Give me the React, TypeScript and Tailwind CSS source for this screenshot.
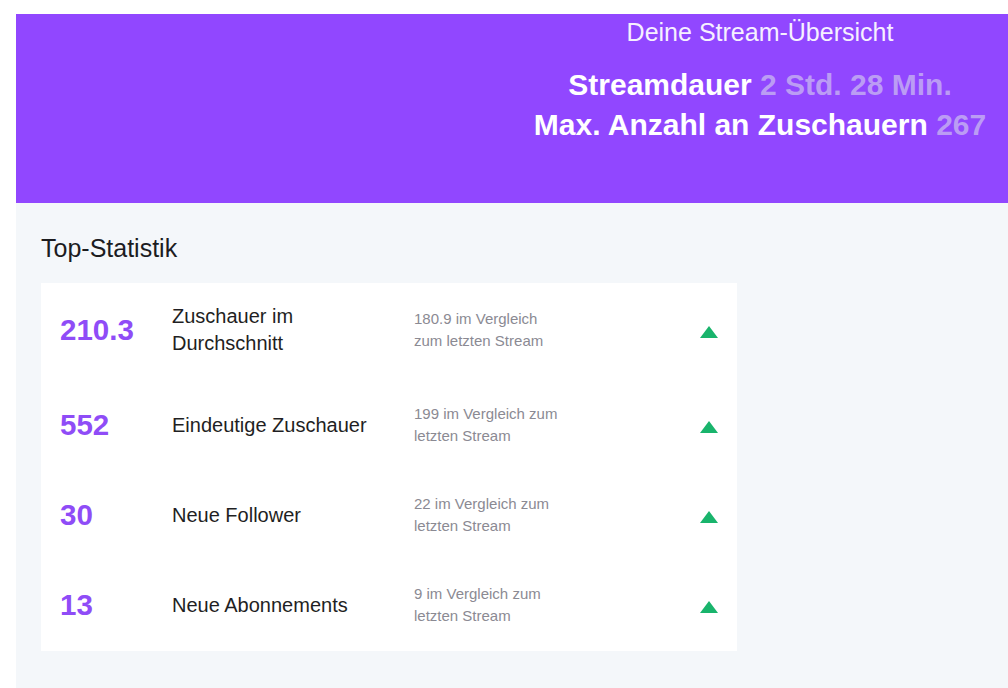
import React from "react";

const rows = [
  { value: "210.3", label: "Zuschauer im Durchschnitt", cmp: "180.9 im Vergleich zum letzten Stream" },
  { value: "552", label: "Eindeutige Zuschauer", cmp: "199 im Vergleich zum letzten Stream" },
  { value: "30", label: "Neue Follower", cmp: "22 im Vergleich zum letzten Stream" },
  { value: "13", label: "Neue Abonnements", cmp: "9 im Vergleich zum letzten Stream" },
];

function TriangleUp() {
  return (
    <svg width="18" height="12" viewBox="0 0 18 12" className="block">
      <polygon points="9,0 18,12 0,12" fill="#19b46c" />
    </svg>
  );
}

export default function App() {
  return (
    <div
      className="flex h-[688px] w-[1008px] flex-col bg-white pl-[16px] pt-[14px]"
      style={{ fontFamily: '"Liberation Sans", Arial, sans-serif' }}
    >
      <header className="grid h-[189px] grid-cols-2 bg-[#9147ff]">
        <div />
        <div className="flex flex-col items-center pt-[3px] text-center">
          <div className="text-[25px] leading-[30px] text-[#f6f0ff]">Deine Stream-Übersicht</div>
          <div className="mt-[18px] text-[30px] font-bold leading-[40px] text-white">
            Streamdauer <span className="text-[#bb9cf4]">2 Std. 28 Min.</span>
          </div>
          <div className="text-[30px] font-bold leading-[40px] text-white">
            Max. Anzahl an Zuschauern <span className="text-[#bb9cf4]">267</span>
          </div>
        </div>
      </header>
      <section className="flex-1 bg-[#f4f7fa] pl-[25px] pt-[30px]">
        <h2 className="text-[25px] leading-[30px] text-[#1c1c1f]">Top-Statistik</h2>
        <div className="mt-[20px] flex w-[696px] flex-col gap-[46px] bg-white pb-[24px] pl-[19px] pr-[19px] pt-[20px]">
          {rows.map((r) => (
            <div key={r.value} className="flex items-center">
              <div className="w-[112px] text-[29.5px] font-bold leading-[34px] text-[#8f4cf7]">{r.value}</div>
              <div className="w-[242px] pr-[20px] text-[20px] leading-[27px] text-[#1f1f23]">{r.label}</div>
              <div className="w-[150px] text-[15px] leading-[22px] text-[#8b8a93]">{r.cmp}</div>
              <div className="ml-auto pt-[3px]">
                <TriangleUp />
              </div>
            </div>
          ))}
        </div>
      </section>
    </div>
  );
}
